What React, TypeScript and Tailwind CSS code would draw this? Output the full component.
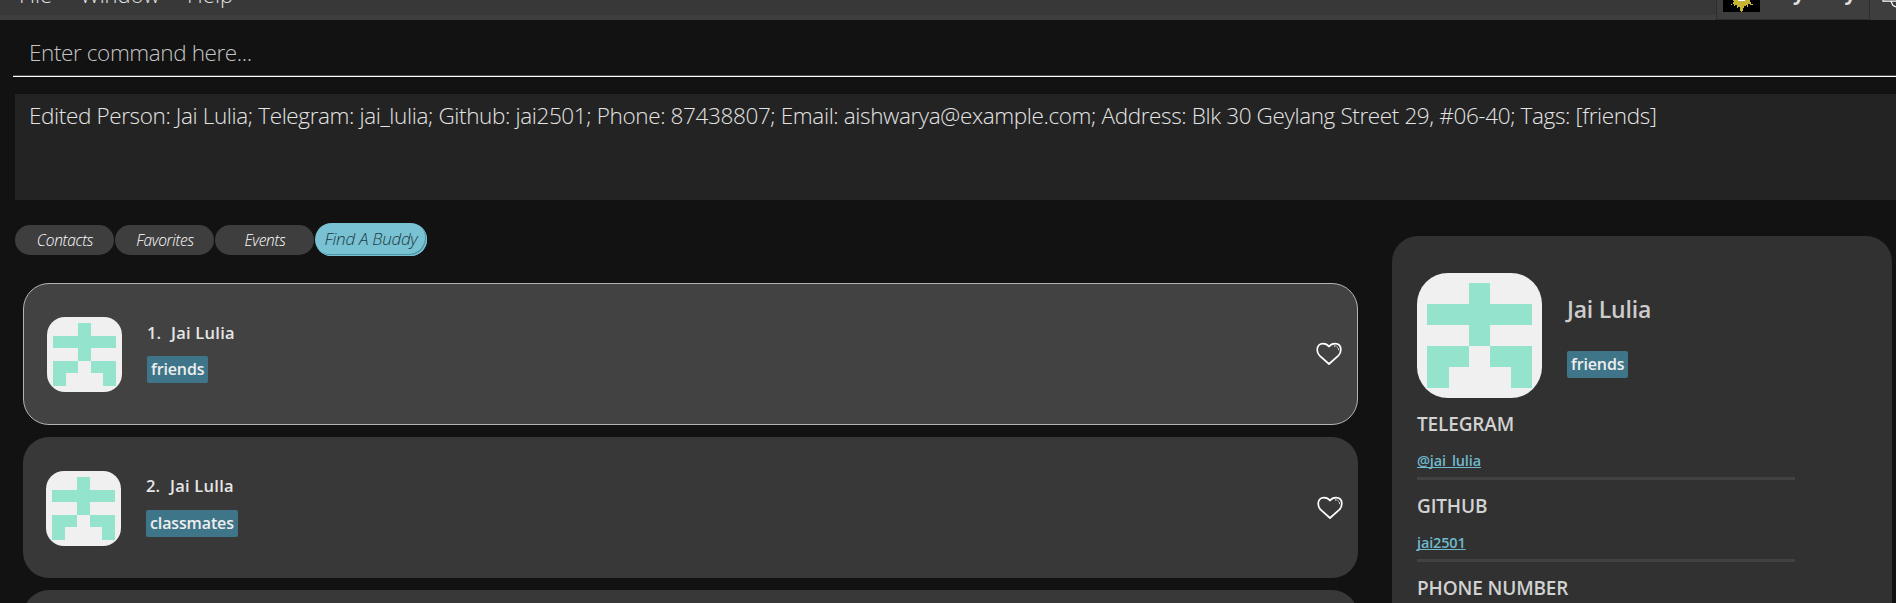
import React from "react";

function Identicon({ className }: { className: string }) {
  return (
    <svg viewBox="0 0 125 125" className={className} shapeRendering="crispEdges">
      <rect width="125" height="125" fill="#f0f0f0" />
      <path
        fill="#93e3cd"
        d="M52 10h21v21h42v21H73v21H52V52H10V31h42zM10 73h42v21H32v21H10zM73 73h42v42H94V94H73z"
      />
    </svg>
  );
}

function Heart() {
  return (
    <svg width="26" height="24" viewBox="0 0 26 24" fill="none" stroke="#fff" className="shrink-0">
      <path
        strokeWidth="1.7"
        strokeLinejoin="round"
        d="M13 22L3.6 13.6C1.9 12 1.2 10 1.2 7.8C1.2 4 3.5 1.6 7 1.6C9.8 1.6 11.6 2.6 13 4.6C14.4 2.6 16.2 1.6 19 1.6C22.5 1.6 24.8 4 24.8 7.8C24.8 10 24.1 12 22.4 13.6Z"
      />
      <path strokeWidth="1" strokeDasharray="1.6 1" d="M18 4C20.5 3.4 22.8 5.4 22.6 9" />
    </svg>
  );
}

function Sun() {
  return (
    <svg width="37" height="12" viewBox="0 0 37 12" className="shrink-0" shapeRendering="crispEdges">
      <rect width="37" height="12" fill="#000" />
      <path
        fill="#c9b535"
        d="M10 0h17v2h1v2h2v1h-3V4h-2v3h-1V5h-1v1h-2v2h-1v3h-1v1h-1v-1h-1V7h-2v1h-1V5h-2v1h-1V4h-2v1H8V4h2V2h1z"
      />
      <path fill="#fff" d="M15 0h7v1h-7z" />
    </svg>
  );
}

function Tag({ children }: { children: React.ReactNode }) {
  return (
    <span className="flex h-[27px] w-fit items-center rounded-[2px] bg-[#3e7589] px-1 pb-px text-[16px] font-semibold leading-none tracking-[-0.13px] text-[#eeeeee]">
      {children}
    </span>
  );
}

type PersonProps = { index: number; name: string; tag: string; selected?: boolean };

function PersonCard({ index, name, tag, selected }: PersonProps) {
  return (
    <div
      className={
        selected
          ? "flex h-[142px] shrink-0 items-center rounded-[26px] border border-[#b4b4b4] bg-[#424242] pl-[23px] pr-[15px]"
          : "flex h-[141px] shrink-0 items-center rounded-[26px] bg-[#383838] pl-[23px] pr-[15px]"
      }
    >
      <Identicon className="mt-px h-[75px] w-[75px] shrink-0 rounded-[18px]" />
      <div className="-mt-[3px] ml-[25px] flex flex-1 flex-col gap-3">
        <div className="flex h-[22px] items-center gap-[10px] text-[16.5px] font-semibold text-[#e6e6e6]">
          <span>{index}.</span>
          <span className="tracking-[0.25px]">{name}</span>
        </div>
        <Tag>{tag}</Tag>
      </div>
      <Heart />
    </div>
  );
}

function Field({ label, value }: { label: string; value: string }) {
  return (
    <div className="flex h-[82px] flex-col">
      <div className="h-[28px] text-[19px] font-semibold leading-[28px] tracking-[-0.15px] text-[#d2d2d2]">{label}</div>
      <a className="mt-[12px] h-[22px] w-fit text-[14.5px] font-semibold leading-[22px] tracking-[-0.15px] text-[#70b9cc] underline decoration-1 underline-offset-1 [text-decoration-skip-ink:none]">
        {value}
      </a>
      <div className="mt-[5px] h-[3px] w-[378px] bg-[#424242]" />
    </div>
  );
}

const tabs = ["Contacts", "Favorites", "Events"];

export default function App() {
  return (
    <div className="flex h-[603px] w-[1896px] flex-col overflow-hidden bg-[#121212] font-['Open_Sans',sans-serif]">
      <header className="flex h-5 shrink-0 overflow-hidden bg-[#3e3e3e]">
        <nav className="flex h-[15px] w-[1716px] shrink-0 bg-[#383838] pl-[19px] text-[22px] font-light leading-none text-[#e0e0e0]">
          <span className="-mt-[17px] w-[61px]">File</span>
          <span className="-mt-[17px] w-[107px]">Window</span>
          <span className="-mt-[17px]">Help</span>
        </nav>
        <div className="flex w-[154px] shrink-0 border-x border-b border-[#2e2e2e] pl-[6px]">
          <Sun />
          <div className="-mt-[17px] ml-[33px] flex gap-[40px] text-[20px] font-bold leading-none text-[#e0e0e0]">
            <span>y</span>
            <span>y</span>
          </div>
        </div>
        <svg width="26" height="10" viewBox="0 0 26 10" className="ml-[12px] shrink-0" fill="none" stroke="#fff" strokeWidth="1.2">
          <path d="M1 0v1.2h13M9 1.5l2 4 3 1.5" />
        </svg>
      </header>

      <div className="ml-[13px] flex h-[57px] shrink-0 items-center border-b border-white pl-[16px] pt-[10px] text-[22.5px] font-light tracking-[-0.4px] text-[#c4c4c4] shadow-[inset_0_-1px_0_#4a4a4a]">
        Enter command here...
      </div>

      <div className="ml-[15px] mt-[17px] h-[106px] shrink-0 whitespace-nowrap bg-[#232323] pl-[14px] pt-[6px] text-[22.5px] font-light leading-[32px] tracking-[-0.375px] text-[#e4e4e4]">
        Edited Person: Jai Lulia; Telegram: jai_lulia; Github: jai2501; Phone: 87438807; Email: aishwarya@example.com; Address: Blk 30 Geylang Street 29, #06-40; Tags: [friends]
      </div>

      <main className="flex min-h-0 flex-1">
        <section className="flex w-[1392px] flex-col">
          <div className="ml-[15px] mt-[23px] flex h-[33px] items-center gap-[1px] italic font-light">
            {tabs.map((tab) => (
              <div
                key={tab}
                className="mt-[1px] flex h-[30px] w-[99px] items-center justify-center rounded-full bg-[#3e3e3e] pl-[1px] pt-[2px] text-[15.5px] tracking-[-0.3px] text-white"
              >
                {tab}
              </div>
            ))}
            <div className="flex h-[33px] w-[112px] items-center justify-center rounded-full bg-[#79c2d3] pb-[2px] text-[17px] tracking-[-0.27px] text-[#1d3a43] shadow-[inset_-1px_-1px_0_#79c2d3,inset_-2px_-2px_0_#4f94a5]">
              Find A Buddy
            </div>
          </div>
          <div className="ml-[23px] mt-[27px] flex w-[1335px] flex-col gap-[12px]">
            <PersonCard index={1} name="Jai Lulia" tag="friends" selected />
            <PersonCard index={2} name="Jai Lulla" tag="classmates" />
            <div className="h-[141px] shrink-0 rounded-[26px] bg-[#383838]" />
          </div>
        </section>

        <aside className="mt-[36px] flex w-[500px] flex-col rounded-t-[26px] bg-[#313131] pl-[25px] pt-[37px]">
          <div className="flex h-[125px] shrink-0">
            <Identicon className="h-[125px] w-[125px] shrink-0 rounded-[31px]" />
            <div className="ml-[25px] flex flex-col">
              <div className="mt-[19px] h-[34px] text-[23px] font-semibold leading-[34px] tracking-[-0.2px] text-[#cccccc]">Jai Lulia</div>
              <div className="mt-[25px]">
                <Tag>friends</Tag>
              </div>
            </div>
          </div>
          <div className="mt-[12px] flex flex-col">
            <Field label="TELEGRAM" value="@jai_lulia" />
            <Field label="GITHUB" value="jai2501" />
            <Field label="PHONE NUMBER" value="87438807" />
          </div>
        </aside>
      </main>
    </div>
  );
}
